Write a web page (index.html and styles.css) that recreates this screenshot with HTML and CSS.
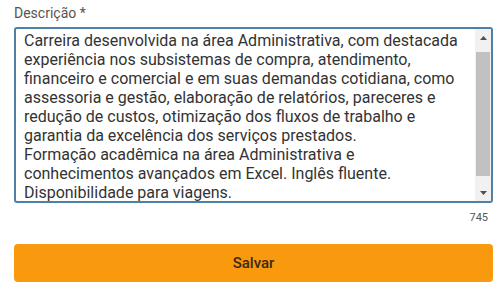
FILE: index.html
```html
<!DOCTYPE html>
<html lang="pt">
<head>
<meta charset="utf-8">
<link rel="stylesheet" href="styles.css">
</head>
<body>
<form class="form">
  <label class="label">Descrição *</label>
  <div class="textarea">
    <div class="text">Carreira desenvolvida na área Administrativa, com destacada experiência nos subsistemas de compra, atendimento, financeiro e comercial e em suas demandas cotidiana, como assessoria e gestão, elaboração de relatórios, pareceres e redução de custos, otimização dos fluxos de trabalho e garantia da excelência dos serviços prestados.<br>Formação acadêmica na área Administrativa e conhecimentos avançados em Excel. Inglês fluente. Disponibilidade para viagens.</div>
    <div class="scrollbar">
      <div class="sb-btn"><svg width="7" height="4" viewBox="0 0 7 4"><path d="M0 4 L3.5 0 L7 4 Z" fill="#505050"/></svg></div>
      <div class="sb-track"><div class="sb-thumb"></div></div>
      <div class="sb-btn"><svg width="7" height="4" viewBox="0 0 7 4"><path d="M0 0 L7 0 L3.5 4 Z" fill="#505050"/></svg></div>
    </div>
  </div>
  <div class="counter">745</div>
  <button type="button" class="btn">Salvar</button>
</form>
</body>
</html>
```
FILE: styles.css
```css
html, body {
  margin: 0;
  padding: 0;
  background: #fff;
}
.form {
  display: flex;
  flex-direction: column;
  padding: 5px 9px 0 14px;
  font-family: Roboto, "Liberation Sans", sans-serif;
}
.label {
  font-size: 14px;
  color: #555;
  line-height: 17px;
  height: 22px;
}
.textarea {
  display: flex;
  height: 172px;
  border: 2px solid #4f80a8;
  border-radius: 3px;
  overflow: hidden;
}
.text {
  flex: 1;
  padding: 2px 13px 0 8px;
  font-size: 16px;
  line-height: 19px;
  color: #333;
  overflow: hidden;
}
.scrollbar {
  width: 16px;
  display: flex;
  flex-direction: column;
  background: #f1f1f1;
}
.sb-btn {
  height: 17px;
  display: flex;
  align-items: center;
  justify-content: center;
}
.sb-track {
  flex: 1;
  display: flex;
  flex-direction: column;
  padding: 6px 1px 0 1px;
}
.sb-thumb {
  height: 124px;
  background: #c1c1c1;
}
.counter {
  align-self: flex-end;
  font-size: 11px;
  color: #555;
  line-height: 13px;
  margin-top: 8px;
  padding-right: 5px;
}
.btn {
  margin-top: 20px;
  height: 38px;
  border: none;
  border-radius: 4px;
  background: #f8990e;
  color: #3a2a12;
  font-family: Roboto, "Liberation Sans", sans-serif;
  font-size: 15px;
  font-weight: 500;
}
```
